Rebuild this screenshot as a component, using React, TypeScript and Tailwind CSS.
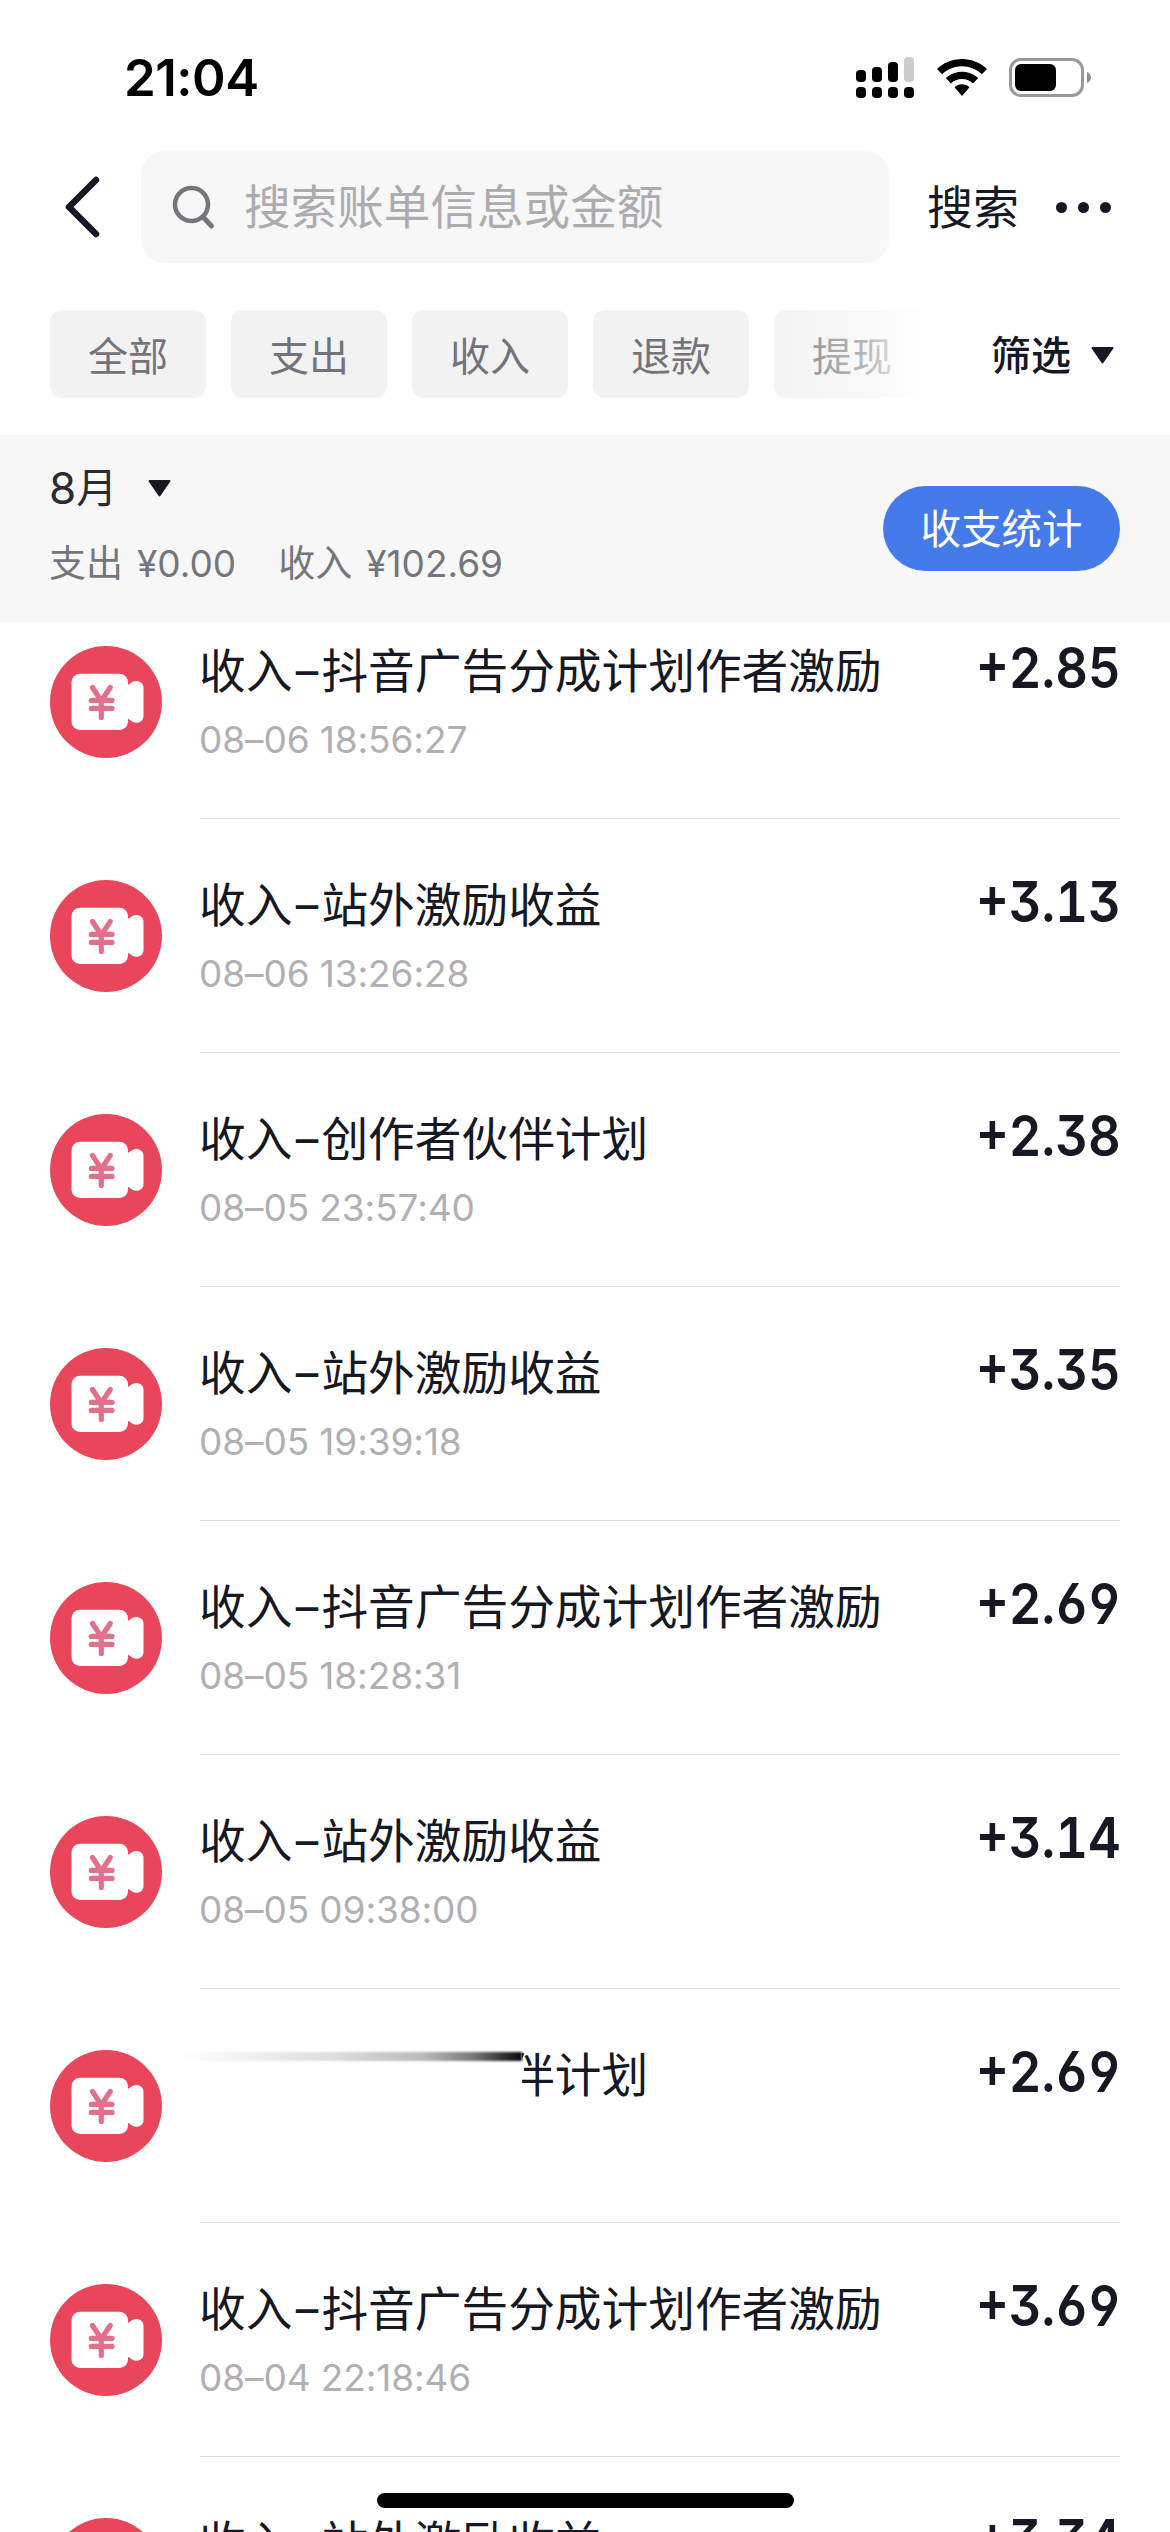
import { clsx } from "clsx";

interface Bill {
  title: string;
  time: string;
  amount: string;
  smudged?: boolean;
}

const filters = ["全部", "支出", "收入", "退款", "提现"];

const bills: Bill[] = [
  { title: "抖音广告分成计划作者激励", time: "08–06 18:56:27", amount: "+2.85" },
  { title: "站外激励收益", time: "08–06 13:26:28", amount: "+3.13" },
  { title: "创作者伙伴计划", time: "08–05 23:57:40", amount: "+2.38" },
  { title: "站外激励收益", time: "08–05 19:39:18", amount: "+3.35" },
  { title: "抖音广告分成计划作者激励", time: "08–05 18:28:31", amount: "+2.69" },
  { title: "站外激励收益", time: "08–05 09:38:00", amount: "+3.14" },
  { title: "伴计划", time: "", amount: "+2.69", smudged: true },
  { title: "抖音广告分成计划作者激励", time: "08–04 22:18:46", amount: "+3.69" },
  { title: "站外激励收益", time: "", amount: "+3.34" },
];

function SignalIcon() {
  return (
    <svg width="58" height="41" viewBox="0 0 58 41">
      <rect x="0" y="13" width="10" height="12" rx="4" />
      <rect x="16" y="10" width="10" height="15" rx="4" />
      <rect x="32" y="5" width="10" height="20" rx="4" />
      <rect x="48" y="0" width="10" height="25" rx="4" fill="#cccccc" />
      <rect x="0" y="30" width="10" height="11" rx="4" />
      <rect x="16" y="30" width="10" height="11" rx="4" />
      <rect x="32" y="30" width="10" height="11" rx="4" />
      <rect x="48" y="30" width="10" height="11" rx="4" />
    </svg>
  );
}

function WifiIcon() {
  return (
    <svg width="50" height="37" viewBox="0 0 50 37">
      <path d="M25 0C34.6 0 43.4 3.700 50 10L44.900 15.300C39.700 10.300 32.700 7.300 25 7.300S10.300 10.300 5.100 15.300L0 10C6.600 3.700 15.400 0 25 0Z" />
      <path d="M25 12.700C31.200 12.700 36.900 15.100 41.200 19.100L36.100 24.400C33.200 21.700 29.300 20 25 20S16.800 21.700 13.900 24.400L8.800 19.100C13.100 15.100 18.800 12.700 25 12.700Z" />
      <path d="M25 25.300C27.900 25.300 30.500 26.400 32.500 28.300L25 37L17.500 28.300C19.500 26.400 22.100 25.300 25 25.300Z" />
    </svg>
  );
}

function BatteryIcon() {
  return (
    <svg width="82" height="39" viewBox="0 0 82 39">
      <rect x="1.500" y="1.500" width="72" height="36" rx="10.500" fill="none" stroke="#999999" strokeWidth="3" />
      <rect x="6" y="6" width="41" height="27" rx="6" />
      <path d="M78 14C80.500 15 82 17 82 19.500S80.500 24 78 25Z" fill="#8c8c8c" />
    </svg>
  );
}

function CameraIcon() {
  return (
    <svg className="shrink-0" width="112" height="112" viewBox="0 0 112 112">
      <circle cx="56" cy="56" r="56" fill="#e9455b" />
      <rect x="21.500" y="27.700" width="56.500" height="56.300" rx="8.500" fill="#fff" />
      <path
        d="M77 39.500L82 36.200C87 33.500 93.500 36 93.500 42V70C93.500 76 87 78.500 82 75.500L77 72Z"
        fill="#fff"
      />
      <path
        d="M42.500 41.500L51.300 55L60.200 41.500M41.300 54.400H62M41.300 62.400H62M51.300 54V71.500"
        fill="none"
        stroke="#e3708a"
        strokeWidth="5.200"
        strokeLinecap="round"
        strokeLinejoin="round"
      />
    </svg>
  );
}

function Caret({ className }: { className?: string }) {
  return (
    <svg className={className} width="23" height="17" viewBox="0 0 23 17">
      <path d="M1.500 1H21.500L11.500 15.500Z" fill="#161823" stroke="#161823" strokeWidth="2" strokeLinejoin="round" />
    </svg>
  );
}

function StatusBar() {
  return (
    <div className="flex h-[151px] items-start pr-[79px] pl-[124px]">
      <span className="mt-[47px] text-[51px] leading-[62px] font-semibold tracking-[-0.5px] text-black">
        21:04
      </span>
      <div className="mt-[57px] ml-auto flex items-center">
        <SignalIcon />
        <span className="ml-[23px]">
          <WifiIcon />
        </span>
        <span className="ml-[22px]">
          <BatteryIcon />
        </span>
      </div>
    </div>
  );
}

function SearchBar() {
  return (
    <div className="flex h-[112px] items-center pr-[59px] pl-[65px]">
      <svg width="35" height="62" viewBox="0 0 35 62">
        <path d="M31 4L4 31L31 58" fill="none" stroke="#161823" strokeWidth="6.500" strokeLinecap="round" strokeLinejoin="round" />
      </svg>
      <div className="ml-[41px] flex h-[112px] w-[748px] items-center rounded-[24px] bg-[#f7f7f8] pl-[31px]">
        <svg width="44" height="46" viewBox="0 0 44 46">
          <circle cx="19.500" cy="20.500" r="16.500" fill="none" stroke="#75767d" strokeWidth="4.500" />
          <path d="M31 33L39.500 42" stroke="#75767d" strokeWidth="5" strokeLinecap="round" />
        </svg>
        <span className="ml-[28px] text-[46.6px] leading-[60px] text-[#acacae]">
          搜索账单信息或金额
        </span>
      </div>
      <span className="ml-[38px] text-[46px] leading-[60px] text-[#161823]">搜索</span>
      <div className="ml-auto flex gap-[11px]">
        <i className="size-[11px] rounded-full bg-[#161823]" />
        <i className="size-[11px] rounded-full bg-[#161823]" />
        <i className="size-[11px] rounded-full bg-[#161823]" />
      </div>
    </div>
  );
}

function FilterTabs() {
  return (
    <div className="flex h-[172px] items-start pt-[47px] pl-[50px]">
      <div className="relative flex gap-[25px]">
        {filters.map((filter) => (
          <span
            key={filter}
            className="flex h-[88px] w-[156px] items-center justify-center rounded-[12px] bg-[#f2f2f3] pt-[5px] text-[40px] leading-[50px] text-[#737479]"
          >
            {filter}
          </span>
        ))}
        <span className="absolute top-0 right-0 h-[88px] w-[160px] bg-linear-to-r from-white/10 via-white/50 via-60% to-white" />
      </div>
      <span className="mt-[21px] ml-[61px] text-[40px] leading-[50px] font-medium text-[#161823]">筛选</span>
      <Caret className="mt-[37px] ml-[20px]" />
    </div>
  );
}

function MonthSummary() {
  return (
    <div className="flex h-[187px] items-start bg-[#f7f7f8] pr-[50px] pl-[49px]">
      <div className="pt-[26px]">
        <div className="flex items-center text-[#2b2b2d]">
          <span className="text-[44px] leading-[54px]">8</span>
          <span className="text-[41px] leading-[54px]">月</span>
          <Caret className="ml-[31px]" />
        </div>
        <div className="mt-[22px] flex text-[37px] leading-[54px] text-[#75767b]">
          <span>支出</span>
          <span className="ml-[14px]">¥0.00</span>
          <span className="ml-[42px]">收入</span>
          <span className="ml-[14px]">¥102.69</span>
        </div>
      </div>
      <span className="mt-[51px] ml-auto flex h-[85px] w-[237px] items-center justify-center rounded-full bg-[#447aea] pt-[3px] text-[40.5px] text-white">
        收支统计
      </span>
    </div>
  );
}

function BillRow({ bill }: { bill: Bill }) {
  return (
    <li className="flex h-[234px] shrink-0 pt-[61px] pl-[50px]">
      <CameraIcon />
      <div className="relative ml-[38px] flex w-[920px] justify-between border-b border-[#dcdcdf] text-[#161823]">
        <div className={clsx("-mt-[5px] -ml-px", bill.smudged && "pl-[309px]")}>
          <p className="flex text-[46.7px] leading-[60px]">
            {!bill.smudged && (
              <>
                收入
                <span className="w-[29px] text-center text-[45px]">–</span>
              </>
            )}
            {bill.title}
          </p>
          <p className="mt-[15px] text-[37px] leading-[48px] tracking-[-0.1px] text-[#b0b0b2]">{bill.time}</p>
        </div>
        <span className="-mt-[12px] -mr-px origin-right scale-x-[0.89] text-[57px] leading-[68px] font-semibold tabular-nums [font-feature-settings:'tnum','cv03','cv04','cv09']">
          {bill.amount}
        </span>
        {bill.smudged && (
          <div className="absolute -top-[8px] -left-[22px] h-[80px] w-[344px] bg-white pt-[10px]">
            <div className="h-[9px] bg-[linear-gradient(to_right,#fff,#dedede_45%,#b8b8b8_72%,#777_86%,#111_99%)] blur-[1px]" />
          </div>
        )}
      </div>
    </li>
  );
}

export default function App() {
  return (
    <main className="relative flex h-[2532px] w-[1170px] flex-col overflow-hidden bg-white font-['Inter','Noto_Sans_CJK_SC',sans-serif]">
      <StatusBar />
      <SearchBar />
      <FilterTabs />
      <MonthSummary />
      <div className="flex-1 overflow-hidden">
        {/* the first row is scrolled partly under the month summary */}
        <ul className="-mt-[37px] flex flex-col">
          {bills.map((bill, index) => (
            <BillRow key={index} bill={bill} />
          ))}
        </ul>
      </div>
      <div className="absolute bottom-[24px] left-[377px] h-[15px] w-[417px] rounded-full bg-black" />
    </main>
  );
}
